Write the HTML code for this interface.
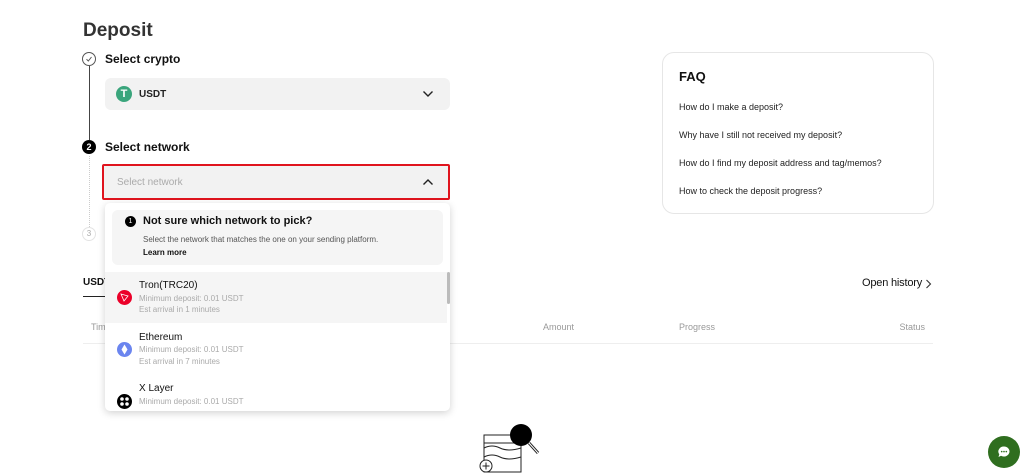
<!DOCTYPE html>
<html><head><meta charset="utf-8"><style>
*{margin:0;padding:0;box-sizing:border-box}
body{width:1024px;height:474px;overflow:hidden;background:#fff;font-family:"Liberation Sans",sans-serif;color:#111;position:relative}
.a{position:absolute;white-space:nowrap}
.b{font-weight:bold}
</style></head><body>
<div class="a b" style="left:83px;top:20px;font-size:19px;color:#333">Deposit</div>
<div class="a" style="left:82px;top:52px;width:14px;height:14px;border:1px solid #555;border-radius:50%"></div>
<svg class="a" style="left:85px;top:55px" width="8" height="8"><path d="M1.5 4.2L3.3 6 6.5 2" stroke="#555" fill="none" stroke-width="1"/></svg>
<div class="a" style="left:88.5px;top:66px;width:1px;height:74px;background:#444"></div>
<div class="a b" style="left:105px;top:52px;font-size:12px">Select crypto</div>
<div class="a" style="left:105px;top:78px;width:345px;height:32px;background:#f2f2f2;border-radius:6px"></div>
<div class="a" style="left:116px;top:86px;width:16px;height:16px;border-radius:50%;background:#3aa57c;color:#fff;font-size:11px;font-weight:bold;text-align:center;line-height:16px">T</div>
<div class="a" style="left:139px;top:89px;font-size:10px;font-weight:bold;color:#222">USDT</div>
<svg class="a" style="left:422px;top:90px" width="12" height="8"><path d="M1.5 1.5L6 6 10.5 1.5" stroke="#222" fill="none" stroke-width="1.4"/></svg>
<div class="a" style="left:82px;top:140px;width:14px;height:14px;border-radius:50%;background:#000;color:#fff;font-size:9px;font-weight:bold;text-align:center;line-height:14px">2</div>
<div class="a b" style="left:105px;top:140px;font-size:12px">Select network</div>
<div class="a" style="left:88.5px;top:156px;width:0;height:71px;border-left:1px dotted #ccc"></div>
<div class="a" style="left:102px;top:164px;width:348px;height:36px;border:2px solid #e0141e;background:#f2f2f2;border-radius:2px"></div>
<div class="a" style="left:117px;top:177px;font-size:10px;color:#aaa">Select network</div>
<svg class="a" style="left:422px;top:178px" width="12" height="8"><path d="M1.5 6.5L6 2 10.5 6.5" stroke="#222" fill="none" stroke-width="1.4"/></svg>
<div class="a" style="left:82px;top:227px;width:14px;height:14px;border-radius:50%;border:1px solid #e3e3e3;color:#aaa;font-size:8px;text-align:center;line-height:12px">3</div>
<div class="a b" style="left:83px;top:277px;font-size:10px">USDT</div>
<div class="a" style="left:83px;top:296px;width:22px;height:1px;background:#222"></div>
<div class="a" style="left:91px;top:322px;font-size:9px;color:#999">Time</div>
<div class="a" style="left:543px;top:322px;font-size:9px;color:#999">Amount</div>
<div class="a" style="left:679px;top:322px;font-size:9px;color:#999">Progress</div>
<div class="a" style="right:99px;top:322px;font-size:9px;color:#999">Status</div>
<div class="a" style="left:83px;top:343px;width:850px;height:1px;background:#eee"></div>
<div class="a" style="right:102px;top:277px;font-size:11px;color:#111;letter-spacing:-0.2px">Open history</div>
<svg class="a" style="left:925px;top:279px" width="7" height="10"><path d="M1.5 1L5.5 5 1.5 9" stroke="#333" fill="none" stroke-width="1.1"/></svg>
<div class="a" style="left:662px;top:52px;width:272px;height:162px;border:1px solid #e6e6e6;border-radius:12px"></div>
<div class="a b" style="left:679px;top:69px;font-size:13px">FAQ</div>
<div class="a" style="left:679px;top:102px;font-size:9px;color:#222">How do I make a deposit?</div>
<div class="a" style="left:679px;top:130px;font-size:9px;color:#222">Why have I still not received my deposit?</div>
<div class="a" style="left:679px;top:158px;font-size:9px;color:#222">How do I find my deposit address and tag/memos?</div>
<div class="a" style="left:679px;top:186px;font-size:9px;color:#222">How to check the deposit progress?</div>
<div class="a" style="left:105px;top:203px;width:345px;height:208px;background:#fff;border-radius:5px;box-shadow:0 2px 8px rgba(0,0,0,.18);overflow:hidden">
 <div class="a" style="left:7px;top:7px;width:331px;height:55px;background:#f5f5f5;border-radius:6px"></div>
 <div class="a" style="left:20px;top:13px;width:11px;height:11px;border-radius:50%;background:#000;color:#fff;font-size:7px;text-align:center;line-height:11px">1</div>
 <div class="a b" style="left:38px;top:12px;font-size:11px">Not sure which network to pick?</div>
 <div class="a" style="left:38px;top:32px;font-size:8px;color:#555">Select the network that matches the one on your sending platform.</div>
 <div class="a b" style="left:38px;top:45px;font-size:8px">Learn more</div>
 <div class="a" style="left:0;top:69px;width:342px;height:51px;background:#f5f5f5"></div>
 <div class="a" style="left:342px;top:69px;width:3px;height:32px;background:#bbb;border-radius:2px"></div>
 <div class="a" style="left:12px;top:87px;width:15px;height:15px;border-radius:50%;background:#eb0029"></div>
 <svg class="a" style="left:15px;top:90px" width="9" height="9"><path d="M1 1L8 3 4 8Z" stroke="#fff" fill="none" stroke-width=".8"/></svg>
 <div class="a" style="left:34px;top:77px;font-size:10px">Tron(TRC20)</div>
 <div class="a" style="left:34px;top:91px;font-size:8px;color:#aaa">Minimum deposit: 0.01 USDT</div>
 <div class="a" style="left:34px;top:102px;font-size:8px;color:#aaa">Est arrival in 1 minutes</div>
 <div class="a" style="left:12px;top:139px;width:15px;height:15px;border-radius:50%;background:#6b85ef"></div>
 <svg class="a" style="left:15px;top:141px" width="9" height="11"><path d="M4.5 0.5L7.5 5.5 4.5 10.5 1.5 5.5Z" fill="#fff"/></svg>
 <div class="a" style="left:34px;top:129px;font-size:10px">Ethereum</div>
 <div class="a" style="left:34px;top:142px;font-size:8px;color:#aaa">Minimum deposit: 0.01 USDT</div>
 <div class="a" style="left:34px;top:154px;font-size:8px;color:#aaa">Est arrival in 7 minutes</div>
 <div class="a" style="left:12px;top:191px;width:15px;height:15px;border-radius:50%;background:#000"></div>
 <svg class="a" style="left:14px;top:193px" width="11" height="11"><circle cx="3" cy="3" r="1.8" fill="#fff"/><circle cx="8" cy="3" r="1.8" fill="#fff"/><circle cx="3" cy="8" r="1.8" fill="#fff"/><circle cx="8" cy="8" r="1.8" fill="#fff"/></svg>
 <div class="a" style="left:34px;top:180px;font-size:10px">X Layer</div>
 <div class="a" style="left:34px;top:194px;font-size:8px;color:#aaa">Minimum deposit: 0.01 USDT</div>
</div>
<svg class="a" style="left:475px;top:420px" width="70" height="54">
<rect x="9" y="15" width="37" height="37" fill="#fff" stroke="#222" stroke-width="1"/>
<line x1="9" y1="23" x2="46" y2="23" stroke="#222"/>
<path d="M9 28q8 -4 16 0t21 0M9 37q8 -4 16 0t21 0" stroke="#222" fill="none"/>
<circle cx="46" cy="15" r="11" fill="#000"/>
<line x1="54" y1="23" x2="63" y2="33" stroke="#222" stroke-width="3"/>
<line x1="54" y1="23" x2="63" y2="33" stroke="#fff" stroke-width="1"/>
<circle cx="11" cy="46" r="6" fill="#fff" stroke="#222"/>
<path d="M11 42.5v7M7.5 46h7" stroke="#222"/>
</svg>
<div class="a" style="left:988px;top:436px;width:32px;height:32px;border-radius:50%;background:#2f6e1f"></div>
<svg class="a" style="left:997px;top:445px" width="14" height="14"><path d="M7 1.5a5.5 5 0 1 1 -3 9.2L1.5 12 2.3 9.3A5.5 5 0 0 1 7 1.5Z" fill="#fff"/><circle cx="4.7" cy="6.6" r=".8" fill="#2f6e1f"/><circle cx="7" cy="6.6" r=".8" fill="#2f6e1f"/><circle cx="9.3" cy="6.6" r=".8" fill="#2f6e1f"/></svg>
</body></html>
